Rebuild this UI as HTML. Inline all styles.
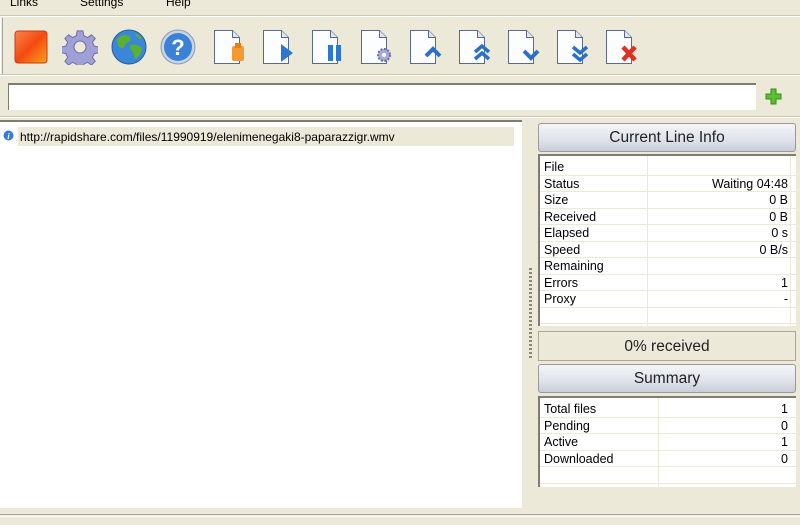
<!DOCTYPE html>
<html><head><meta charset="utf-8"><style>
*{margin:0;padding:0;box-sizing:border-box}
body{width:800px;height:525px;background:#ece9d8;position:relative;overflow:hidden;font-family:"Liberation Sans",Tahoma,sans-serif;font-size:12px;color:#000}
.a{position:absolute}
.menu span{position:absolute;top:-5px;font-size:12px}
.ic{position:absolute;top:29px}
.btn{position:absolute;left:538px;width:258px;height:29px;border:1px solid #9a9a9a;border-radius:3px;background:linear-gradient(#f4f5f8,#dfe2ea 60%,#c8cdd8);text-align:center;font-size:15.5px;line-height:28px;color:#222}
.grid{position:absolute;background:#fff;border-top:2px solid #7f7d70;border-left:2px solid #7f7d70;padding-top:3px}
.row{height:16.5px;border-bottom:1px solid #ece9d8;position:relative;font-size:12.5px;line-height:16px}
.row .l{position:absolute;left:4px}
.row .r{position:absolute;right:8px}
</style></head><body>
<div class="menu"><span style="left:10px">Links</span><span style="left:80px">Settings</span><span style="left:166px">Help</span></div>
<div class="a" style="left:0;top:15px;width:800px;height:2px;border-top:1px solid #c9c6b4;border-bottom:1px solid #fff"></div>
<div class="a" style="left:0;top:18px;width:3px;height:56px;border-left:1px solid #fff;border-right:1px solid #aca899"></div>

<svg class="ic" style="left:14px;top:30px" width="34" height="34"><defs><linearGradient id="rg" x1="0" y1="0" x2="1" y2="1"><stop offset="0" stop-color="#f7864a"/><stop offset=".5" stop-color="#f54a10"/><stop offset="1" stop-color="#f9a21a"/></linearGradient></defs><rect x="1" y="1" width="32" height="32" rx="3" fill="url(#rg)" stroke="#c53a1a"/></svg>
<svg class="ic" style="left:62px" width="36" height="36" viewBox="0 0 36 36"><g fill="#9fa0d8" stroke="#6a6aa8"><path d="M15 1h6l1 5 4 2 4-3 4 4-3 4 2 4 5 1v6l-5 1-2 4 3 4-4 4-4-3-4 2-1 5h-6l-1-5-4-2-4 3-4-4 3-4-2-4-5-1v-6l5-1 2-4-3-4 4-4 4 3 4-2z" transform="scale(.95) translate(1 1)"/></g><circle cx="18" cy="18" r="6" fill="#ece9d8" stroke="#6a6aa8"/></svg>
<svg class="ic" style="left:111px" width="36" height="36"><circle cx="18" cy="18" r="17" fill="#3a86d8" stroke="#2a5a9a"/><path d="M6 10c4-4 8-5 12-3 3 2 1 6-2 7-3 1-2 5-5 5-3 0-5-3-5-9zM20 16c4-1 9 0 11 4-1 4-3 8-7 10-2-3 0-5-3-8-2-2-3-5-1-6zM24 4c3 1 6 3 7 6-3 0-6-2-7-6z" fill="#5cb030"/></svg>
<svg class="ic" style="left:160px" width="36" height="36"><circle cx="18" cy="18" r="17" fill="#c8d4e4" stroke="#8a9ab8"/><circle cx="18" cy="18" r="14" fill="#3b82d6"/><text x="18" y="26" font-size="22" font-weight="bold" fill="#fff" text-anchor="middle" font-family="Liberation Sans">?</text></svg>

<svg width="0" height="0" style="position:absolute"><defs><g id="pg"><path d="M1.5 1.5h18l7 7v26h-25z" fill="#fcfdff" stroke="#5a6a8a"/><path d="M19.5 1.5v7h7" fill="#dfe6f2" stroke="#5a6a8a"/></g></defs></svg>

<svg class="ic" style="left:213px" width="36" height="37"><use href="#pg"/><rect x="19" y="17" width="12" height="15" rx="2" fill="#f59a30"/><rect x="22" y="14" width="6" height="5" fill="#e08020"/></svg>
<svg class="ic" style="left:262px" width="36" height="37"><use href="#pg"/><path d="M19 15l12 9-12 9z" fill="#2a78d0"/></svg>
<svg class="ic" style="left:311px" width="36" height="37"><use href="#pg"/><rect x="17" y="16" width="5" height="16" fill="#2a78d0"/><rect x="25" y="16" width="5" height="16" fill="#2a78d0"/></svg>
<svg class="ic" style="left:360px" width="36" height="37"><use href="#pg"/><circle cx="24" cy="26" r="6" fill="#a8aad8" stroke="#6a6aa8" stroke-dasharray="2 1.5" stroke-width="2"/><circle cx="24" cy="26" r="2" fill="#fff"/></svg>
<svg class="ic" style="left:409px" width="36" height="37"><use href="#pg"/><path d="M17 27l7-7 7 7" fill="none" stroke="#2a70c8" stroke-width="4"/></svg>
<svg class="ic" style="left:458px" width="36" height="37"><use href="#pg"/><path d="M17 23l7-6 7 6M17 30l7-6 7 6" fill="none" stroke="#2a70c8" stroke-width="3.5"/></svg>
<svg class="ic" style="left:507px" width="36" height="37"><use href="#pg"/><path d="M17 22l7 7 7-7" fill="none" stroke="#2a70c8" stroke-width="4"/></svg>
<svg class="ic" style="left:556px" width="36" height="37"><use href="#pg"/><path d="M17 18l7 6 7-6M17 25l7 6 7-6" fill="none" stroke="#2a70c8" stroke-width="3.5"/></svg>
<svg class="ic" style="left:605px" width="36" height="37"><use href="#pg"/><path d="M18 18l12 13M30 18l-12 13" stroke="#e03020" stroke-width="4.5"/></svg>

<div class="a" style="left:0;top:74px;width:800px;height:2px;border-top:1px solid #c9c6b4;border-bottom:1px solid #fff"></div>
<div class="a" style="left:8px;top:83px;width:748px;height:27px;background:#fff;border-top:2px solid #7f7d70;border-left:1px solid #7f7d70"></div>
<svg class="a" style="left:765px;top:88px" width="17" height="17"><path d="M6 1h5v5h5v5h-5v5h-5v-5h-5v-5h5z" fill="#5cc030" stroke="#3a8a20"/></svg>
<div class="a" style="left:0;top:116px;width:800px;height:2px;border-top:1px solid #c9c6b4;border-bottom:1px solid #fff"></div>

<div class="a" style="left:0;top:120px;width:522px;height:388px;background:#fff;border-top:2px solid #7f7d70"></div>
<div class="a" style="left:18px;top:127px;width:496px;height:19px;background:#ece9d8"></div>
<svg class="a" style="left:3px;top:130px" width="11" height="11"><circle cx="5.5" cy="5.5" r="5" fill="#3a7ad8"/><text x="5.5" y="9" font-size="8" fill="#fff" text-anchor="middle" font-style="italic" font-weight="bold">i</text></svg>
<div class="a" style="left:20px;top:130px;font-size:12px">http://rapidshare.com/files/11990919/elenimenegaki8-paparazzigr.wmv</div>
<div class="a" style="left:529px;top:268px;width:3px;height:90px;background:repeating-linear-gradient(#8a8a80 0 2px,transparent 2px 4px)"></div>

<div class="btn" style="top:123px">Current Line Info</div>
<div class="grid" style="left:538px;top:154px;width:258px;height:172px">
<div class="a" style="left:107px;top:0;width:1px;height:170px;background:#ece9d8"></div>
<div class="a" style="left:250px;top:0;width:1px;height:170px;background:#ece9d8"></div>
<div class="row"><span class="l">File</span></div>
<div class="row"><span class="l">Status</span><span class="r">Waiting 04:48</span></div>
<div class="row"><span class="l">Size</span><span class="r">0 B</span></div>
<div class="row"><span class="l">Received</span><span class="r">0 B</span></div>
<div class="row"><span class="l">Elapsed</span><span class="r">0 s</span></div>
<div class="row"><span class="l">Speed</span><span class="r">0 B/s</span></div>
<div class="row"><span class="l">Remaining</span></div>
<div class="row"><span class="l">Errors</span><span class="r">1</span></div>
<div class="row"><span class="l">Proxy</span><span class="r">-</span></div>
<div class="row"></div>
</div>
<div class="a" style="left:538px;top:331px;width:258px;height:30px;border:1px solid #aca899;text-align:center;font-size:15.5px;line-height:29px;color:#222">0% received</div>
<div class="btn" style="top:364px">Summary</div>
<div class="grid" style="left:538px;top:396px;width:258px;height:91px">
<div class="a" style="left:118px;top:0;width:1px;height:89px;background:#ece9d8"></div>
<div class="row"><span class="l">Total files</span><span class="r">1</span></div>
<div class="row"><span class="l">Pending</span><span class="r">0</span></div>
<div class="row"><span class="l">Active</span><span class="r">1</span></div>
<div class="row"><span class="l">Downloaded</span><span class="r">0</span></div>
<div class="row"></div>
</div>
<div class="a" style="left:0;top:514px;width:800px;height:3px;border-top:1px solid #aca899;border-bottom:1px solid #fff"></div>
</body></html>
